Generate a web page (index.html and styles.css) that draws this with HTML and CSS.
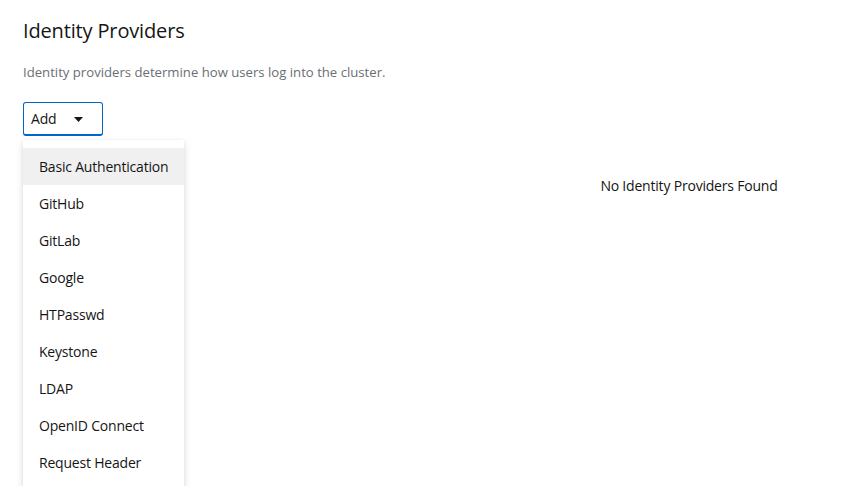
FILE: index.html
```html
<!DOCTYPE html>
<html>
<head>
<meta charset="utf-8">
<link rel="stylesheet" href="styles.css">
</head>
<body>
<div class="page">
  <h1 class="title">Identity Providers</h1>
  <p class="desc">Identity providers determine how users log into the cluster.</p>
  <div class="dropdown">
    <button class="toggle">Add <span class="caret"><svg width="9" height="5" viewBox="0 0 9 5"><path d="M0 0h9L4.5 5z" fill="#151515"/></svg></span></button>
    <ul class="menu">
      <li class="item active">Basic Authentication</li>
      <li class="item">GitHub</li>
      <li class="item">GitLab</li>
      <li class="item">Google</li>
      <li class="item">HTPasswd</li>
      <li class="item">Keystone</li>
      <li class="item">LDAP</li>
      <li class="item">OpenID Connect</li>
      <li class="item">Request Header</li>
    </ul>
  </div>
  <div class="empty-row">
    <div class="empty">No Identity Providers Found</div>
  </div>
</div>
</body>
</html>
```

FILE: styles.css
```css
* { box-sizing: border-box; }
html, body { margin: 0; padding: 0; background: #fff; }
body {
  font-family: "Open Sans", "Liberation Sans", sans-serif;
  color: #151515;
  width: 851px;
  height: 486px;
  overflow: hidden;
}
.page { padding: 18px 23px 0 23px; }
.title {
  margin: 0;
  font-size: 20px;
  font-weight: 500;
  line-height: 26px;
  letter-spacing: -0.15px;
  color: #151515;
}
.desc {
  margin: 18px 0 0 0;
  font-size: 13.15px;
  line-height: 20px;
  color: #6a6e73;
}
.dropdown { position: relative; margin-top: 20px; width: 80px; }
.toggle {
  display: flex;
  align-items: center;
  width: 80px;
  height: 34px;
  padding: 0 0 0 7px;
  border: 1px solid #06c;
  border-bottom: 2px solid #06c;
  border-radius: 3px;
  background: #fff;
  font-family: inherit;
  font-size: 14px;
  letter-spacing: -0.2px;
  color: #151515;
}
.caret { display: flex; margin-left: 18px; margin-top: 1px; }
.menu {
  position: absolute;
  top: 38px;
  left: 0;
  width: 161px;
  margin: 0;
  padding: 8px 0;
  list-style: none;
  background: #fff;
  box-shadow: 0 4px 8px rgba(3,3,3,0.12), 0 0 4px rgba(3,3,3,0.06);
  z-index: 2;
}
.item {
  height: 37px;
  line-height: 37px;
  padding-left: 16px;
  font-size: 14px;
  letter-spacing: -0.2px;
  color: #151515;
  white-space: nowrap;
}
.item.active { background: #f0f0f0; }
.empty-row { display: flex; justify-content: flex-end; margin-top: 40px; margin-right: -23px; }
.empty { width: 324px; text-align: center; font-size: 14px; letter-spacing: -0.2px; line-height: 20px; }
```
